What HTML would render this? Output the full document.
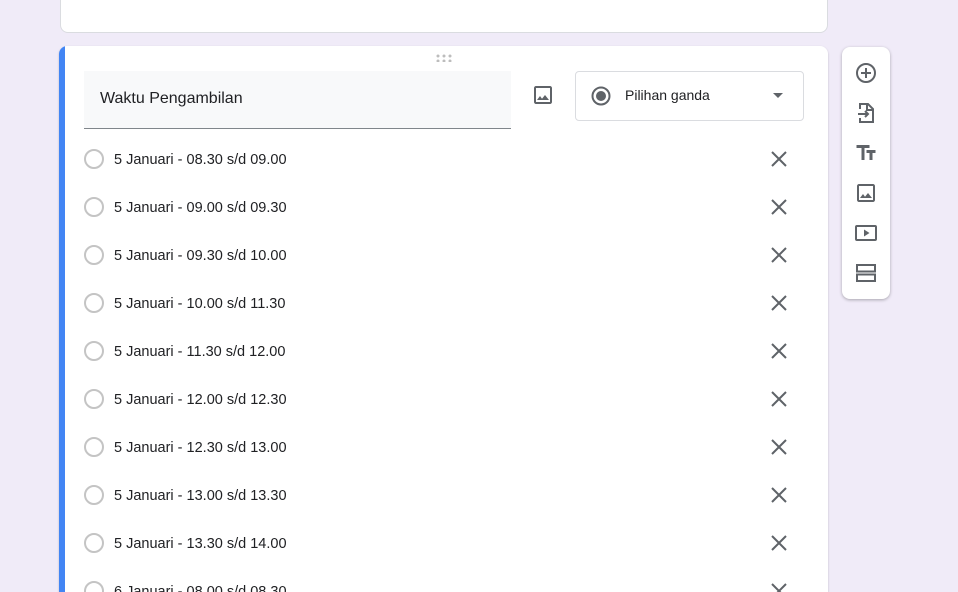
<!DOCTYPE html>
<html style="width:958px;height:592px;overflow:hidden"><head><meta charset="utf-8"><style>
*{margin:0;padding:0;box-sizing:border-box}
body{width:958px;height:592px;overflow:hidden;background:#f0ebf8;font-family:"Liberation Sans",Arial,sans-serif;position:relative;color:#202124}
.top{position:absolute;left:60px;top:-10px;width:768px;height:43px;background:#fff;border:1px solid #dadce0;border-radius:8px}
.card{position:absolute;left:59px;top:46px;width:769px;height:546px;background:#fff;border-radius:8px 8px 0 0;overflow:hidden;box-shadow:0 1px 2px rgba(0,0,0,.2)}
.bar{position:absolute;left:0;top:0;width:6px;height:100%;background:#4285f4}
.title{position:absolute;left:25px;top:25px;width:427px;height:58px;background:#f8f9fa;border-bottom:1px solid #80868b;font-size:16px;padding:19px 0 0 16px}
.drop{position:absolute;left:516px;top:25px;width:229px;height:50px;border:1px solid #dadce0;border-radius:4px;font-size:14px}
.opt{position:absolute;left:25px;height:24px;width:720px;font-size:14.5px;line-height:24px}
.opt .r{position:absolute;left:0;top:2px;width:20px;height:20px;border:2px solid #c4c4c4;border-radius:50%}
.opt span{position:absolute;left:30px;top:1px}
.opt svg{position:absolute;left:686px;top:3px}
.side{position:absolute;left:842px;top:47px;width:48px;height:252px;background:#fff;border-radius:8px;box-shadow:0 1px 3px rgba(0,0,0,.3)}
.side svg{position:absolute;left:12px}
.dots{position:absolute;left:377px;top:8px}
</style></head><body>
<div class="top"></div>
<div class="card">
<div class="bar"></div>
<svg class="dots" width="16" height="8"><g fill="#bdbdbd"><circle cx="2" cy="2" r="1.5"/><circle cx="8" cy="2" r="1.5"/><circle cx="14" cy="2" r="1.5"/><circle cx="2" cy="7" r="1.5"/><circle cx="8" cy="7" r="1.5"/><circle cx="14" cy="7" r="1.5"/></g></svg>
<div class="title">Waktu Pengambilan</div>
<svg style="position:absolute;left:472px;top:37px" width="24" height="24" viewBox="0 0 24 24"><path fill="#5f6368" d="M19 3H5c-1.1 0-2 .9-2 2v14c0 1.1.9 2 2 2h14c1.1 0 2-.9 2-2V5c0-1.1-.9-2-2-2zm0 16H5V5h14v14zm-5-7l-3 3.72L9 13l-3 4h12l-4-5z"/></svg>
<div class="drop">
<svg style="position:absolute;left:13px;top:12px" width="24" height="24" viewBox="0 0 24 24"><circle cx="12" cy="12" r="8.5" fill="none" stroke="#5f6368" stroke-width="2"/><circle cx="12" cy="12" r="5" fill="#5f6368"/></svg>
<span style="position:absolute;left:49px;top:15px">Pilihan ganda</span>
<svg style="position:absolute;left:196px;top:20px" width="12" height="8"><path d="M1 1h10L6 6z" fill="#5f6368"/></svg>
</div>
<div class="opt" style="top:101px"><div class="r"></div><span>5 Januari - 08.30 s/d 09.00</span><svg width="18" height="18" viewBox="0 0 18 18"><path d="M2 2L16 16M16 2L2 16" stroke="#5f6368" stroke-width="2"/></svg></div>
<div class="opt" style="top:149px"><div class="r"></div><span>5 Januari - 09.00 s/d 09.30</span><svg width="18" height="18" viewBox="0 0 18 18"><path d="M2 2L16 16M16 2L2 16" stroke="#5f6368" stroke-width="2"/></svg></div>
<div class="opt" style="top:197px"><div class="r"></div><span>5 Januari - 09.30 s/d 10.00</span><svg width="18" height="18" viewBox="0 0 18 18"><path d="M2 2L16 16M16 2L2 16" stroke="#5f6368" stroke-width="2"/></svg></div>
<div class="opt" style="top:245px"><div class="r"></div><span>5 Januari - 10.00 s/d 11.30</span><svg width="18" height="18" viewBox="0 0 18 18"><path d="M2 2L16 16M16 2L2 16" stroke="#5f6368" stroke-width="2"/></svg></div>
<div class="opt" style="top:293px"><div class="r"></div><span>5 Januari - 11.30 s/d 12.00</span><svg width="18" height="18" viewBox="0 0 18 18"><path d="M2 2L16 16M16 2L2 16" stroke="#5f6368" stroke-width="2"/></svg></div>
<div class="opt" style="top:341px"><div class="r"></div><span>5 Januari - 12.00 s/d 12.30</span><svg width="18" height="18" viewBox="0 0 18 18"><path d="M2 2L16 16M16 2L2 16" stroke="#5f6368" stroke-width="2"/></svg></div>
<div class="opt" style="top:389px"><div class="r"></div><span>5 Januari - 12.30 s/d 13.00</span><svg width="18" height="18" viewBox="0 0 18 18"><path d="M2 2L16 16M16 2L2 16" stroke="#5f6368" stroke-width="2"/></svg></div>
<div class="opt" style="top:437px"><div class="r"></div><span>5 Januari - 13.00 s/d 13.30</span><svg width="18" height="18" viewBox="0 0 18 18"><path d="M2 2L16 16M16 2L2 16" stroke="#5f6368" stroke-width="2"/></svg></div>
<div class="opt" style="top:485px"><div class="r"></div><span>5 Januari - 13.30 s/d 14.00</span><svg width="18" height="18" viewBox="0 0 18 18"><path d="M2 2L16 16M16 2L2 16" stroke="#5f6368" stroke-width="2"/></svg></div>
<div class="opt" style="top:533px"><div class="r"></div><span>6 Januari - 08.00 s/d 08.30</span><svg width="18" height="18" viewBox="0 0 18 18"><path d="M2 2L16 16M16 2L2 16" stroke="#5f6368" stroke-width="2"/></svg></div>
</div>
<div class="side">
<svg style="top:14px" width="24" height="24" viewBox="0 0 24 24"><circle cx="12" cy="12" r="9" fill="none" stroke="#5f6368" stroke-width="2"/><path d="M12 7v10M7 12h10" stroke="#5f6368" stroke-width="2"/></svg>
<svg style="top:54px" width="24" height="24" viewBox="0 0 24 24"><path d="M6 8V3h8l5 5v13H6v-4" fill="none" stroke="#5f6368" stroke-width="2"/><path d="M13 3v6h6M4 13h10M11 10l3 3-3 3" fill="none" stroke="#5f6368" stroke-width="2"/></svg>
<svg style="top:94px" width="24" height="24" viewBox="0 0 24 24"><path fill="#5f6368" d="M2.5 4v3h5v12h3V7h5V4h-13zm19 5h-9v3h3v7h3v-7h3V9z"/></svg>
<svg style="top:134px" width="24" height="24" viewBox="0 0 24 24"><path fill="#5f6368" d="M19 3H5c-1.1 0-2 .9-2 2v14c0 1.1.9 2 2 2h14c1.1 0 2-.9 2-2V5c0-1.1-.9-2-2-2zm0 16H5V5h14v14zm-5-7l-3 3.72L9 13l-3 4h12l-4-5z"/></svg>
<svg style="top:174px" width="24" height="24" viewBox="0 0 24 24"><rect x="2" y="5" width="20" height="14" rx="1" fill="none" stroke="#5f6368" stroke-width="2"/><path d="M10 8.5v7l5.5-3.5z" fill="#5f6368"/></svg>
<svg style="top:214px" width="24" height="24" viewBox="0 0 24 24"><rect x="3" y="4" width="18" height="6.5" fill="none" stroke="#5f6368" stroke-width="2"/><rect x="3" y="13.5" width="18" height="6.5" fill="none" stroke="#5f6368" stroke-width="2"/></svg>
</div>
</body></html>
